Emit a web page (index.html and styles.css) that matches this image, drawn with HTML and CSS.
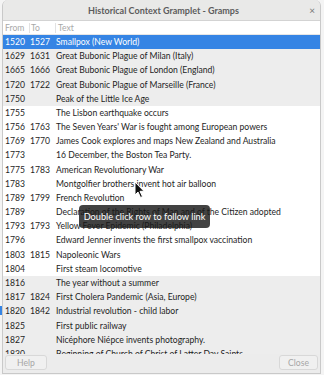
FILE: index.html
```html
<!DOCTYPE html>
<html lang="en">
<head>
    <meta charset="UTF-8">
    <meta name="viewport" content="width=device-width, initial-scale=1.0">
    <title>Historical Context Gramplet - Gramps</title>
    <link rel="stylesheet" href="styles.css">
</head>
<body>
    <div class="side-mark"></div>
    <div class="window">
        <div class="titlebar">
            <span class="title">Historical Context Gramplet - Gramps</span>
            <span class="close-x">&#215;</span>
        </div>

        <div class="list">
            <div class="row head">
                <div class="col from">From</div>
                <div class="col to">To</div>
                <div class="col text">Text</div>
            </div>
            <div class="row selected"><div class="col from">1520</div><div class="col to">1527</div><div class="col text">Smallpox (New World)</div></div>
            <div class="row dim"><div class="col from">1629</div><div class="col to">1631</div><div class="col text">Great Bubonic Plague of Milan (Italy)</div></div>
            <div class="row dim"><div class="col from">1665</div><div class="col to">1666</div><div class="col text">Great Bubonic Plague of London (England)</div></div>
            <div class="row dim"><div class="col from">1720</div><div class="col to">1722</div><div class="col text">Great Bubonic Plague of Marseille (France)</div></div>
            <div class="row dim"><div class="col from">1750</div><div class="col to"></div><div class="col text">Peak of the Little Ice Age</div></div>
            <div class="row"><div class="col from">1755</div><div class="col to"></div><div class="col text">The Lisbon earthquake occurs</div></div>
            <div class="row"><div class="col from">1756</div><div class="col to">1763</div><div class="col text">The Seven Years' War is fought among European powers</div></div>
            <div class="row"><div class="col from">1769</div><div class="col to">1770</div><div class="col text">James Cook explores and maps New Zealand and Australia</div></div>
            <div class="row"><div class="col from">1773</div><div class="col to"></div><div class="col text">16 December, the Boston Tea Party.</div></div>
            <div class="row"><div class="col from">1775</div><div class="col to">1783</div><div class="col text">American Revolutionary War</div></div>
            <div class="row"><div class="col from">1783</div><div class="col to"></div><div class="col text">Montgolfier brothers invent hot air balloon</div></div>
            <div class="row"><div class="col from">1789</div><div class="col to">1799</div><div class="col text">French Revolution</div></div>
            <div class="row"><div class="col from">1789</div><div class="col to"></div><div class="col text">Declaration of the Rights of Man and of the Citizen adopted</div></div>
            <div class="row"><div class="col from">1793</div><div class="col to">1793</div><div class="col text">Yellow Fever Epidemic (Philadelphia)</div></div>
            <div class="row"><div class="col from">1796</div><div class="col to"></div><div class="col text">Edward Jenner invents the first smallpox vaccination</div></div>
            <div class="row"><div class="col from">1803</div><div class="col to">1815</div><div class="col text">Napoleonic Wars</div></div>
            <div class="row"><div class="col from">1804</div><div class="col to"></div><div class="col text">First steam locomotive</div></div>
            <div class="row dim"><div class="col from">1816</div><div class="col to"></div><div class="col text">The year without a summer</div></div>
            <div class="row dim"><div class="col from">1817</div><div class="col to">1824</div><div class="col text">First Cholera Pandemic (Asia, Europe)</div></div>
            <div class="row dim"><div class="col from">1820</div><div class="col to">1842</div><div class="col text">Industrial revolution - child labor</div></div>
            <div class="row dim"><div class="col from">1825</div><div class="col to"></div><div class="col text">First public railway</div></div>
            <div class="row dim"><div class="col from">1827</div><div class="col to"></div><div class="col text">Nicéphore Niépce invents photography.</div></div>
            <div class="row dim"><div class="col from">1830</div><div class="col to"></div><div class="col text">Beginning of Church of Christ of Latter Day Saints</div></div>

            <div class="tooltip">Double click row to follow link</div>
            <svg class="cursor" width="11" height="18" viewBox="0 0 11 18">
                <path d="M1 1 L1 14 L4 11 L6.5 16.5 L8.5 15.6 L6 10.3 L10 10.3 Z" fill="#111" stroke="#fff" stroke-width="1" stroke-linejoin="round"/>
            </svg>
        </div>

        <div class="footer">
            <button class="button">Help</button>
            <button class="button">Close</button>
        </div>
    </div>
</body>
</html>
```

FILE: styles.css
```css
body {
    margin: 0;
    background-color: #f4f4f4;
    font-family: Lato, "Liberation Sans", sans-serif;
    font-size: 8.6px;
    color: #1e1e1e;
}

.side-mark {
    position: absolute;
    left: 0;
    top: 306px;
    width: 2px;
    height: 9px;
    background-color: #3584e4;
}

.window {
    margin: 0 3px 0 2px;
    height: 373px;
    border: 1px solid #c9c9c9;
    border-top: none;
    border-radius: 6px 6px 0 0;
    background-color: #ececec;
    display: flex;
    flex-direction: column;
    overflow: hidden;
}

.titlebar {
    height: 20px;
    flex: none;
    background-color: #e9e9e8;
    border-bottom: 1px solid #d3d3d3;
    display: flex;
    align-items: center;
    justify-content: center;
    position: relative;
}

.title {
    font-weight: bold;
    font-size: 9px;
    color: #5c5c5c;
    padding-left: 4px;
}

.close-x {
    position: absolute;
    right: 5px;
    top: 4px;
    font-size: 10px;
    color: #777;
}

.list {
    flex: 1;
    background-color: #fff;
    overflow: hidden;
    position: relative;
}

.row {
    display: flex;
    height: 14.18px;
    align-items: center;
    white-space: nowrap;
}

.row.head {
    height: 13px;
    color: #a9a9a9;
    border-bottom: 1px solid #e6e6e6;
}

.row.head .col.from,
.row.head .col.to {
    border-right: 1px solid #e2e2e2;
}

.row.head .col.to {
    padding-left: 1px;
}

.row.dim {
    background-color: #ededed;
}

.row.selected {
    background-color: #3584e4;
    color: #fff;
}

.col.from {
    width: 24px;
    padding-left: 2px;
    flex: none;
}

.col.to {
    width: 24px;
    padding-left: 1px;
    flex: none;
}

.col.text {
    padding-left: 2px;
}

.tooltip {
    position: absolute;
    left: 76px;
    top: 184px;
    width: 131px;
    height: 23px;
    line-height: 23px;
    text-align: center;
    border-radius: 4px;
    background-color: rgba(25, 25, 25, 0.82);
    color: #fff;
    font-size: 9.2px;
}

.cursor {
    position: absolute;
    left: 131px;
    top: 160px;
}

.footer {
    height: 18px;
    flex: none;
    display: flex;
    justify-content: space-between;
    align-items: flex-start;
    padding: 1px 2px 0 2px;
    background-color: #ececec;
}

.button {
    font-family: Lato, "Liberation Sans", sans-serif;
    font-size: 8.6px;
    color: #a6a6a6;
    background-color: #f0f0f0;
    border: 1px solid #d8d8d8;
    border-radius: 3px;
    height: 15px;
    width: 42px;
    padding: 0;
}

.button:last-child {
    width: 39px;
}
```
